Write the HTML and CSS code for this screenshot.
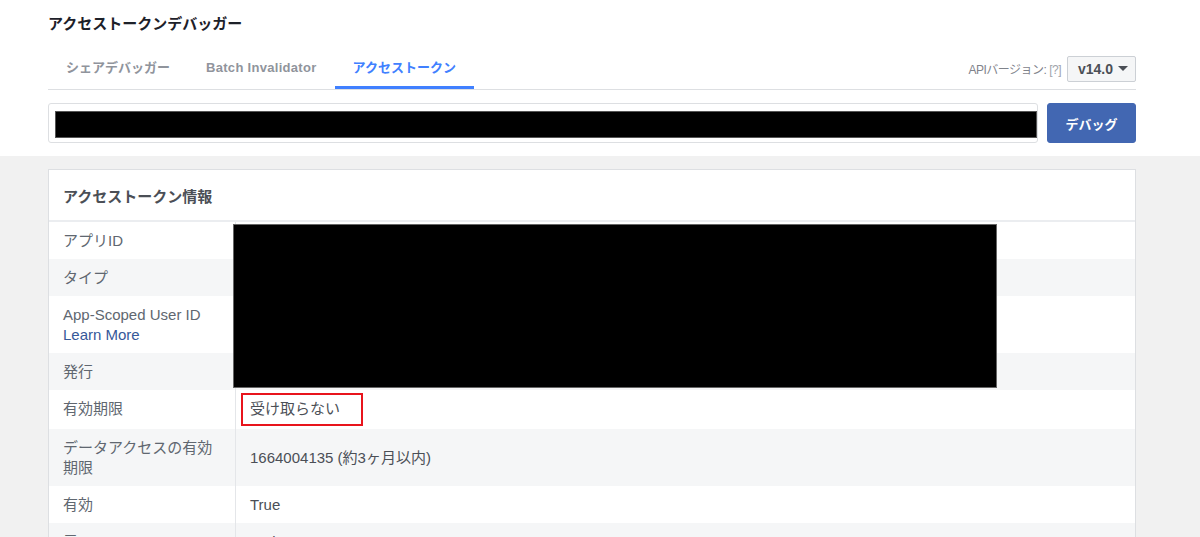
FILE: index.html
```html
<!DOCTYPE html>
<html lang="ja">
<head>
<meta charset="utf-8">
<title>アクセストークンデバッガー</title>
<link rel="stylesheet" href="styles.css">
</head>
<body>
<div class="top">
  <h1 class="title">アクセストークンデバッガー</h1>
  <div class="nav">
    <div class="tabs">
      <a class="tab">シェアデバッガー</a>
      <a class="tab latin">Batch Invalidator</a>
      <a class="tab active">アクセストークン</a>
    </div>
    <div class="api">
      <span class="api-label">APIバージョン: <span class="help">[?]</span></span>
      <div class="select"><span>v14.0</span><i class="caret"></i></div>
    </div>
  </div>
  <div class="input-row">
    <div class="input"><div class="redact-bar"></div></div>
    <button class="btn">デバッグ</button>
  </div>
</div>
<div class="main">
  <div class="card">
    <div class="card-head">アクセストークン情報</div>
    <div class="table">
      <div class="row"><div class="k">アプリID</div><div class="v"></div></div>
      <div class="row alt"><div class="k">タイプ</div><div class="v"></div></div>
      <div class="row"><div class="k">App-Scoped User ID<br><a class="link">Learn More</a></div><div class="v"></div></div>
      <div class="row alt"><div class="k">発行</div><div class="v"></div></div>
      <div class="row"><div class="k">有効期限</div><div class="v"><span class="mark">受け取らない</span></div></div>
      <div class="row alt"><div class="k">データアクセスの有効期限</div><div class="v">1664004135 (約3ヶ月以内)</div></div>
      <div class="row"><div class="k">有効</div><div class="v">True</div></div>
      <div class="row alt"><div class="k">元</div><div class="v">Web</div></div>
    </div>
    <div class="redact-block"></div>
  </div>
</div>
</body>
</html>
```

FILE: styles.css
```css
* { box-sizing: border-box; }
html, body { margin: 0; padding: 0; }
body {
  font-family: "Liberation Sans", "Noto Sans CJK JP", sans-serif;
  background: #f1f1f1;
  color: #4b4f56;
  height: 537px;
  overflow: hidden;
}
.top {
  background: #fff;
  padding: 15px 64px 13px 48px;
}
.title {
  margin: 0;
  font-size: 15px;
  line-height: 18px;
  font-weight: bold;
  color: #1d2129;
}
.nav {
  margin-top: 15px;
  display: flex;
  justify-content: space-between;
  align-items: center;
  border-bottom: 1px solid #dddfe2;
}
.tabs { display: flex; }
.tab {
  display: block;
  font-size: 13px;
  line-height: 16px;
  font-weight: bold;
  color: #90949c;
  padding: 12px 18px 10px;
  border-bottom: 3px solid transparent;
}
.tab.latin { letter-spacing: 0.3px; }
.tab.active {
  color: #4080ff;
  border-bottom-color: #4080ff;
}
.api {
  display: flex;
  align-items: center;
  gap: 6px;
}
.api-label {
  font-size: 12px;
  letter-spacing: -0.5px;
  color: #7f838b;
}
.help { color: #a0a4ab; }
.select {
  display: flex;
  align-items: center;
  gap: 5px;
  height: 26px;
  width: 69px;
  padding: 0 9px 0 10px;
  background: #f5f6f7;
  border: 1px solid #ccd0d5;
  border-radius: 2px;
  font-size: 14px;
  font-weight: bold;
  color: #4b4f56;
}
.caret {
  width: 0;
  height: 0;
  border-left: 5px solid transparent;
  border-right: 5px solid transparent;
  border-top: 5px solid #4b4f56;
}
.input-row {
  margin-top: 13px;
  display: flex;
  gap: 9px;
  height: 40px;
}
.input {
  flex: 1;
  border: 1px solid #dddfe2;
  border-radius: 3px;
  padding: 7px 0 3px 6px;
  background: #fff;
}
.redact-bar {
  height: 27px;
  background: #000;
  border: 1px solid #555;
}
.btn {
  width: 89px;
  height: 40px;
  border: 1px solid #4267b2;
  border-radius: 3px;
  background: #4267b2;
  color: #fff;
  font-family: inherit;
  font-size: 13px;
  font-weight: bold;
  padding: 0;
}
.main {
  padding: 13px 64px 0 48px;
}
.card {
  position: relative;
  background: #fff;
  border: 1px solid #dddfe2;
}
.card-head {
  height: 52px;
  padding: 0 14px;
  display: flex;
  align-items: center;
  font-size: 15px;
  font-weight: bold;
  color: #4b4f56;
  border-bottom: 2px solid #ebedf0;
}
.row {
  display: flex;
  font-size: 15px;
  line-height: 20px;
}
.row.alt { background: #f5f6f7; }
.k {
  width: 187px;
  flex: none;
  padding: 9px 14px 8px;
  color: #606770;
  border-right: 1px solid #e4e6e9;
}
.v {
  flex: 1;
  padding: 9px 14px 8px;
  display: flex;
  align-items: center;
  color: #4b4f56;
}
.link { color: #365899; }
.mark {
  display: inline-block;
  margin: -6px 0 -5px -9px;
  padding: 4px 21px 5px 7px;
  border: 2px solid #e8141c;
}
.redact-block {
  position: absolute;
  left: 184px;
  top: 54px;
  width: 764px;
  height: 164px;
  background: #000;
  border: 1px solid #666;
}
```
